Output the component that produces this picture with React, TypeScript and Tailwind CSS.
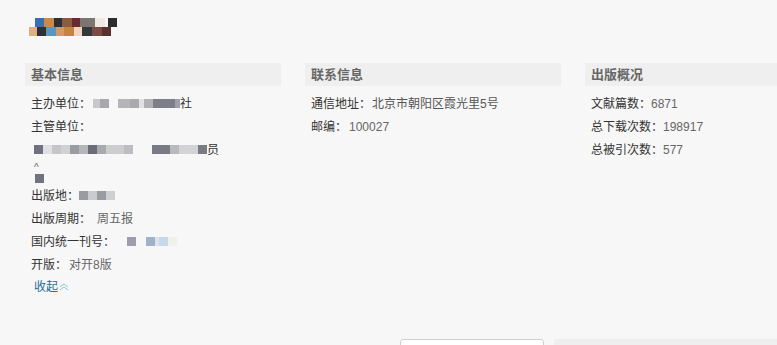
import React from "react";

const F = { fontFamily: '"Liberation Sans", "Noto Sans CJK SC", sans-serif' };

function Blocks({ items }: { items: [number, string][] }) {
  return (
    <span className="inline-flex items-center h-[9px]">
      {items.map(([w, c], i) => (
        <span key={i} className="inline-block h-[9px]" style={{ width: w, background: c }} />
      ))}
    </span>
  );
}

const topRow: [number, string][] = [
  [6, "transparent"],
  [9, "#3a6db5"],
  [10, "#c98a45"],
  [8, "#2f2f33"],
  [10, "#8c5a3c"],
  [8, "#6b2a30"],
  [15, "#7d7572"],
  [10, "#efe9e2"],
  [3, "transparent"],
  [9, "#2d2d2d"],
];
const botRow: [number, string][] = [
  [8, "#e2b07a"],
  [9, "#2d3035"],
  [10, "#5a95c8"],
  [8, "#d09a62"],
  [10, "#c4843f"],
  [8, "#f0d6c0"],
  [10, "#35373b"],
  [10, "#7a4a44"],
  [9, "#5a3030"],
];

function Row({ label, children }: { label: string; children?: React.ReactNode }) {
  return (
    <div className="h-[23px] flex items-center text-[12px] text-[#333] pl-[6px] whitespace-nowrap">
      <span>{label}</span>
      {children}
    </div>
  );
}

function Header({ title, last }: { title: string; last?: boolean }) {
  return (
    <div
      className={`h-[23px] flex items-center bg-[#efefef] pl-[6px] text-[13px] font-bold text-[#666] ${
        last ? "w-full" : "w-[256px]"
      }`}
    >
      {title}
    </div>
  );
}

export default function App() {
  return (
    <div className="w-[777px] h-[345px] bg-[#f7f7f7] overflow-hidden relative" style={F}>
      <div className="pt-[18px] pl-[29px] flex flex-col">
        <div className="flex h-[9px]">
          {topRow.map(([w, c], i) => (
            <span key={i} style={{ width: w, background: c }} className="h-[9px] block" />
          ))}
        </div>
        <div className="flex h-[9px]">
          {botRow.map(([w, c], i) => (
            <span key={i} style={{ width: w, background: c }} className="h-[9px] block" />
          ))}
        </div>
      </div>

      <div className="flex pl-[25px] mt-[27px]">
        <div className="w-[280px] shrink-0">
          <Header title="基本信息" />
          <div className="mt-[6px]">
            <Row label="主办单位：">
              <span className="ml-[2px]" />
              <Blocks
                items={[
                  [7, "#c8c8cc"],
                  [9, "#a7a7ad"],
                  [9, "transparent"],
                  [12, "#b4b4b9"],
                  [9, "#a9a9ae"],
                  [5, "#e1e1e3"],
                  [9, "#b0b0b5"],
                  [22, "#7e7e88"],
                  [5, "#a0a0a8"],
                ]}
              />
              <span>社</span>
            </Row>
            <Row label="主管单位：" />
            <div className="h-[23px] flex items-center pl-[9px] text-[12px] text-[#333]">
              <Blocks
                items={[
                  [9, "#707080"],
                  [9, "#e0e0e2"],
                  [9, "#c6c6ca"],
                  [9, "#d2d2d5"],
                  [9, "#9b9ba3"],
                  [9, "#b5b5ba"],
                  [9, "#6c6c78"],
                  [9, "#a9a9b0"],
                  [18, "#cdcdd0"],
                  [9, "#bdbdc1"],
                  [19, "transparent"],
                  [18, "#7a7a85"],
                  [9, "#b9b9bd"],
                  [19, "#d3d3d6"],
                  [9, "#7b7b86"],
                ]}
              />
              <span>员</span>
            </div>
            <div className="h-[23px] flex flex-col pl-[9px] relative">
              <span className="text-[10px] leading-[10px] text-[#666] mt-[2px]">^</span>
              <span className="block w-[9px] h-[9px] bg-[#72727e] mt-[1px] ml-[1px]" />
            </div>
            <Row label="出版地：">
              <Blocks
                items={[
                  [9, "#9a9aa2"],
                  [9, "#cbcbce"],
                  [9, "#9a9aa2"],
                  [9, "#cfcfd2"],
                ]}
              />
            </Row>
            <Row label="出版周期：">
              <span className="text-[#666] ml-[6px]">周五报</span>
            </Row>
            <Row label="国内统一刊号：">
              <span className="ml-[12px]" />
              <Blocks
                items={[
                  [9, "#9e9cae"],
                  [10, "transparent"],
                  [9, "#a0b2c8"],
                  [4, "#d8e3ee"],
                  [9, "#c6d8ea"],
                  [9, "#eef2ea"],
                ]}
              />
            </Row>
            <Row label="开版：">
              <span className="text-[#666] ml-[2px]">对开8版</span>
            </Row>
            <div className="h-[22px] flex items-center pl-[9px] text-[12px] text-[#1f6d9a]">
              <span>收起</span>
              <svg width="10" height="8" viewBox="0 0 10 8" className="ml-[1px]">
                <path d="M1 4 L5 1 L9 4 M1 7 L5 4 L9 7" fill="none" stroke="#8fbfe0" strokeWidth="1" />
              </svg>
            </div>
          </div>
        </div>

        <div className="w-[280px] shrink-0">
          <Header title="联系信息" />
          <div className="mt-[6px]">
            <Row label="通信地址：">
              <span className="text-[#555] ml-[1px]">北京市朝阳区霞光里5号</span>
            </Row>
            <Row label="邮编：">
              <span className="text-[#666] ml-[2px]">100027</span>
            </Row>
          </div>
        </div>

        <div className="flex-1">
          <Header title="出版概况" last />
          <div className="mt-[6px]">
            <Row label="文献篇数：">
              <span className="text-[#666]">6871</span>
            </Row>
            <Row label="总下载次数：">
              <span className="text-[#666]">198917</span>
            </Row>
            <Row label="总被引次数：">
              <span className="text-[#666]">577</span>
            </Row>
          </div>
        </div>
      </div>

      <div className="absolute left-0 top-[339px] w-full flex">
        <div className="ml-[400px] w-[144px] h-[20px] bg-white border border-[#cfcfcf] rounded-t-[3px]" />
        <div className="ml-[10px] flex-1 h-[20px] bg-[#efefef]" />
      </div>
    </div>
  );
}
